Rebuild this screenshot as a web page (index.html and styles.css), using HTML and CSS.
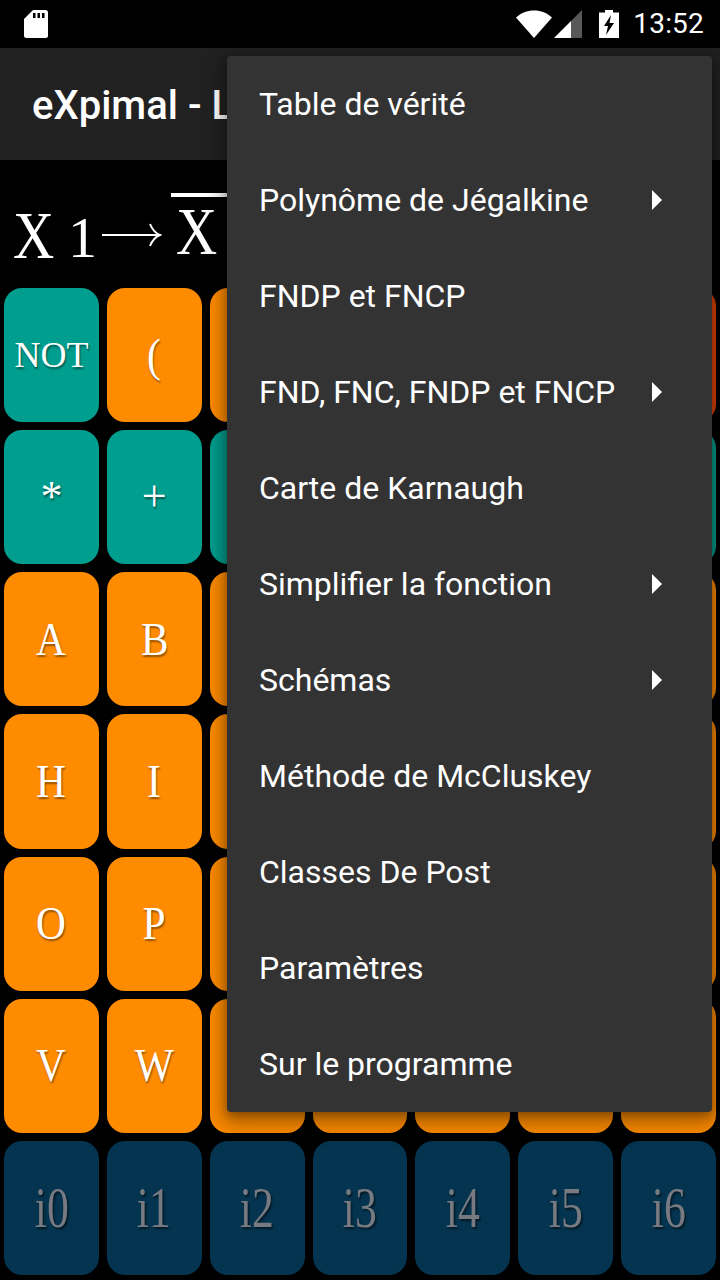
FILE: index.html
```html
<!DOCTYPE html>
<html lang="fr">
<head>
<meta charset="utf-8">
<title>eXpimal</title>
<link rel="stylesheet" href="styles.css">
</head>
<body>
<div class="app">
  <header class="status">
    <svg class="sd" width="24" height="28" viewBox="0 0 24 28"><path fill="#fff" d="M9 0H21.500A2.500 2.500 0 0 1 24 2.500V25.500A2.500 2.500 0 0 1 21.500 28H2.500A2.500 2.500 0 0 1 0 25.500V9Z"/><path fill="#000" d="M9 3h2.500v5H9zM13.500 3H16v5h-2.500zM18 3h2.500v5H18z"/></svg>
    <div class="status-right">
      <svg class="wifi" width="36" height="28" viewBox="0 0 36 28"><path fill="#fff" d="M0 7.500C5 3 11 .5 18 .5S31 3 36 7.500L18 28Z"/></svg>
      <svg class="signal" width="28" height="28" viewBox="0 0 28 28"><path fill="#fff" fill-opacity=".35" d="M28 0V28H17V11Z"/><path fill="#fff" d="M17 11V28H0Z"/></svg>
      <svg class="battery" width="20" height="28" viewBox="0 0 20 28"><path fill="#fff" d="M6 0h8v2.500h6V28H0V2.500h6Z"/><path fill="#000" d="M12 5 5 16h4l-2 9 8-12h-4.500Z"/></svg>
      <span class="clock">13:52</span>
    </div>
  </header>
  <div class="toolbar"><span class="title">eXpimal - L</span></div>
  <div class="expr">
    <span class="expr-x">X</span>
    <span class="expr-one">1</span>
    <svg class="arrow" width="60" height="28" viewBox="0 0 60 28"><path fill="none" stroke="#fff" stroke-width="2" d="M0 14H57M48 3C50 8 53 12 58 14C53 16 50 20 48 25"/></svg>
    <span class="expr-not"><span class="expr-x">X</span></span>
  </div>
  <main class="keys">
    <button class="key teal"><span class="lbl small">NOT</span></button>
    <button class="key orange"><span class="lbl">(</span></button>
    <button class="key orange"></button><button class="key orange"></button><button class="key orange"></button><button class="key orange"></button>
    <button class="key red"></button>

    <button class="key teal"><span class="lbl sym">*</span></button>
    <button class="key teal"><span class="lbl sym">+</span></button>
    <button class="key teal"></button><button class="key teal"></button><button class="key teal"></button><button class="key teal"></button><button class="key teal"></button>

    <button class="key orange"><span class="lbl">A</span></button>
    <button class="key orange"><span class="lbl">B</span></button>
    <button class="key orange"></button><button class="key orange"></button><button class="key orange"></button><button class="key orange"></button><button class="key orange"></button>

    <button class="key orange"><span class="lbl">H</span></button>
    <button class="key orange"><span class="lbl">I</span></button>
    <button class="key orange"></button><button class="key orange"></button><button class="key orange"></button><button class="key orange"></button><button class="key orange"></button>

    <button class="key orange"><span class="lbl">O</span></button>
    <button class="key orange"><span class="lbl">P</span></button>
    <button class="key orange"></button><button class="key orange"></button><button class="key orange"></button><button class="key orange"></button><button class="key orange"></button>

    <button class="key orange"><span class="lbl">V</span></button>
    <button class="key orange"><span class="lbl">W</span></button>
    <button class="key orange"></button><button class="key orange"></button><button class="key orange"></button><button class="key orange"></button><button class="key orange"></button>

    <button class="key navy"><span class="lbl idx">i0</span></button>
    <button class="key navy"><span class="lbl idx">i1</span></button>
    <button class="key navy"><span class="lbl idx">i2</span></button>
    <button class="key navy"><span class="lbl idx">i3</span></button>
    <button class="key navy"><span class="lbl idx">i4</span></button>
    <button class="key navy"><span class="lbl idx">i5</span></button>
    <button class="key navy"><span class="lbl idx">i6</span></button>
  </main>
  <nav class="menu">
    <div class="item">Table de vérité</div>
    <div class="item">Polynôme de Jégalkine<i class="tri"></i></div>
    <div class="item">FNDP et FNCP</div>
    <div class="item">FND, FNC, FNDP et FNCP<i class="tri"></i></div>
    <div class="item">Carte de Karnaugh</div>
    <div class="item">Simplifier la fonction<i class="tri"></i></div>
    <div class="item">Schémas<i class="tri"></i></div>
    <div class="item">Méthode de McCluskey</div>
    <div class="item">Classes De Post</div>
    <div class="item">Paramètres</div>
    <div class="item">Sur le programme</div>
  </nav>
</div>
</body>
</html>
```

FILE: styles.css
```css
* { box-sizing: border-box; }
html, body { margin: 0; padding: 0; background: #000; }
.app {
  position: relative;
  width: 720px;
  height: 1280px;
  overflow: hidden;
  background: #000;
  display: flex;
  flex-direction: column;
  font-family: Roboto, sans-serif;
  color: #fff;
}
.status {
  height: 48px;
  flex: none;
  display: flex;
  align-items: center;
  justify-content: space-between;
  padding: 0 16px 0 24px;
  background: #000;
}
.status-right { display: flex; align-items: center; }
.wifi { margin-right: 2px; }
.signal { margin-right: 17px; }
.battery { margin-right: 14px; }
.clock { font-size: 28px; line-height: 48px; letter-spacing: .2px; }
.toolbar {
  height: 112px;
  flex: none;
  display: flex;
  align-items: center;
  padding-left: 32px;
  background: #212121;
}
.title { font-size: 40px; font-weight: 500; line-height: 1; position: relative; top: 2px; }
.expr {
  height: 128px;
  flex: none;
  display: flex;
  align-items: center;
  padding: 22px 0 0 13px;
  font-family: "Liberation Serif", serif;
}
.expr-x {
  display: inline-block;
  font-size: 68px;
  line-height: 1;
  transform: scaleX(.84);
  transform-origin: left center;
  width: 42px;
}
.expr-one {
  font-size: 58px;
  line-height: 1;
  margin: 6px 0 0 13px;
  width: 34px;
}
.arrow { margin-right: 9px; }
.expr-not {
  display: inline-block;
  border-top: 4px solid #fff;
  padding: 0 11px 0 5px;
  margin-top: -12px;
}
.keys {
  display: grid;
  grid-template-columns: repeat(7, 1fr);
  grid-template-rows: repeat(7, 1fr);
  gap: 8px;
  padding: 0 4px;
  height: 987px;
  flex: none;
}
.key {
  border: 0;
  padding: 0;
  border-radius: 18px;
  display: flex;
  align-items: center;
  justify-content: center;
  font-family: "Liberation Serif", serif;
  color: #fff;
  min-width: 0;
}
.teal { background: #009e8e; }
.orange { background: #ff8c00; }
.red { background: #e64100; }
.navy { background: #04344f; }
.lbl {
  display: inline-block;
  font-size: 47px;
  line-height: 1;
  transform: scaleX(.88);
  text-shadow: 1px 2px 2px rgba(0,0,0,.45);
}
.small { font-size: 36px; transform: none; }
.sym { font-size: 44px; transform: none; }
.idx {
  font-size: 56px;
  color: #777a80;
  transform: scaleX(.78);
  text-shadow: 2px 2px 2px rgba(0,0,0,.5);
}
.menu {
  position: absolute;
  left: 227px;
  top: 56px;
  width: 485px;
  border-radius: 4px;
  background: #333;
  box-shadow: 0 8px 20px 6px rgba(0,0,0,.28), 0 3px 10px rgba(0,0,0,.3);
}
.item {
  height: 96px;
  display: flex;
  align-items: center;
  justify-content: space-between;
  padding: 0 50px 0 32px;
  font-size: 32px;
  color: #fff;
}
.tri {
  width: 0;
  height: 0;
  border-left: 10px solid #fff;
  border-top: 10px solid transparent;
  border-bottom: 10px solid transparent;
}
```
